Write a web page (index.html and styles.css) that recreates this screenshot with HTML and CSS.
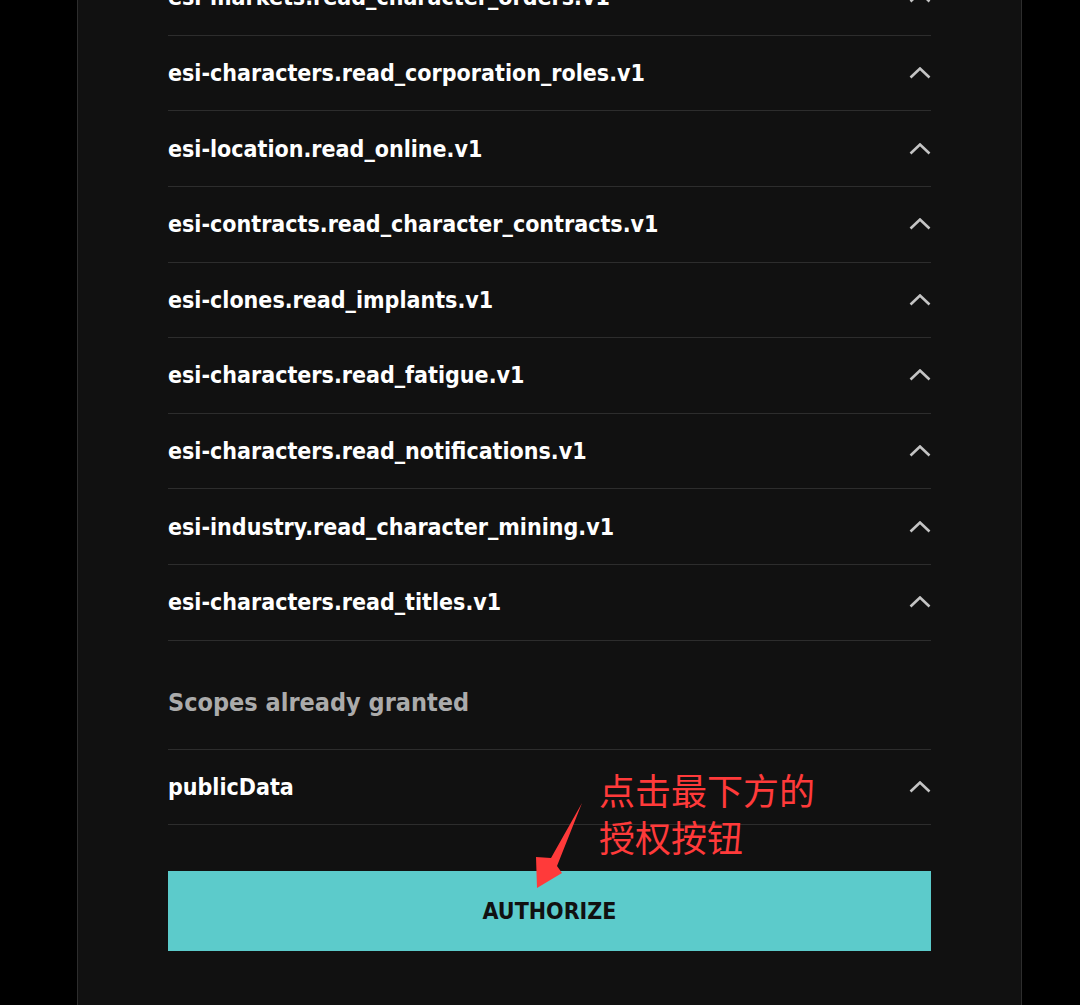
FILE: index.html
```html
<!DOCTYPE html>
<html lang="en">
<head>
    <meta charset="UTF-8">
    <meta name="viewport" content="width=device-width, initial-scale=1.0">
    <title>Authorize</title>
    <link rel="stylesheet" href="styles.css">
</head>
<body>
    <div class="panel">
        <ul class="scope-list">
            <li class="scope"><span>esi-markets.read_character_orders.v1</span><svg class="chevron" viewBox="0 0 22 12"><polyline points="1.5,10.5 11,1.5 20.5,10.5"/></svg></li>
            <li class="scope"><span>esi-characters.read_corporation_roles.v1</span><svg class="chevron" viewBox="0 0 22 12"><polyline points="1.5,10.5 11,1.5 20.5,10.5"/></svg></li>
            <li class="scope"><span>esi-location.read_online.v1</span><svg class="chevron" viewBox="0 0 22 12"><polyline points="1.5,10.5 11,1.5 20.5,10.5"/></svg></li>
            <li class="scope"><span>esi-contracts.read_character_contracts.v1</span><svg class="chevron" viewBox="0 0 22 12"><polyline points="1.5,10.5 11,1.5 20.5,10.5"/></svg></li>
            <li class="scope"><span>esi-clones.read_implants.v1</span><svg class="chevron" viewBox="0 0 22 12"><polyline points="1.5,10.5 11,1.5 20.5,10.5"/></svg></li>
            <li class="scope"><span>esi-characters.read_fatigue.v1</span><svg class="chevron" viewBox="0 0 22 12"><polyline points="1.5,10.5 11,1.5 20.5,10.5"/></svg></li>
            <li class="scope"><span>esi-characters.read_notifications.v1</span><svg class="chevron" viewBox="0 0 22 12"><polyline points="1.5,10.5 11,1.5 20.5,10.5"/></svg></li>
            <li class="scope"><span>esi-industry.read_character_mining.v1</span><svg class="chevron" viewBox="0 0 22 12"><polyline points="1.5,10.5 11,1.5 20.5,10.5"/></svg></li>
            <li class="scope"><span>esi-characters.read_titles.v1</span><svg class="chevron" viewBox="0 0 22 12"><polyline points="1.5,10.5 11,1.5 20.5,10.5"/></svg></li>
        </ul>

        <div class="granted">
            <h3 class="granted-title">Scopes already granted</h3>
            <ul class="scope-list">
                <li class="scope"><span>publicData</span><svg class="chevron" viewBox="0 0 22 12"><polyline points="1.5,10.5 11,1.5 20.5,10.5"/></svg></li>
            </ul>
            <button class="authorize">AUTHORIZE</button>

            <!-- screenshot annotation -->
            <div class="note">点击最下方的<br>授权按钮</div>
            <svg class="note-arrow" viewBox="0 0 60 95"><polygon points="52,5 27,68 32,75 7,90 6,59 21,60"/></svg>
        </div>
    </div>
</body>
</html>
```

FILE: styles.css
```css
:root {
    --panel-bg: #111111;
    --line-color: #2d2d2d;
    --text-color: #ffffff;
    --muted-color: #ababab;
    --accent-color: #5ccbcb;
    --note-color: #ff3a3a;
}

* {
    margin: 0;
    padding: 0;
    box-sizing: border-box;
}

body {
    background: #000;
    font-family: 'DejaVu Sans Condensed', 'DejaVu Sans', sans-serif;
    font-stretch: condensed;
    color: var(--text-color);
    height: 1005px;
    overflow: hidden;
}

.panel {
    width: 945px;
    min-height: 1100px;
    margin: -40px 0 0 77px;
    padding: 0 90px;
    background: var(--panel-bg);
    border-left: 1px solid var(--line-color);
    border-right: 1px solid var(--line-color);
}

.scope-list {
    list-style: none;
}

.scope {
    display: flex;
    justify-content: space-between;
    align-items: center;
    height: 75.625px;
    border-bottom: 1px solid var(--line-color);
    font-size: 23px;
    font-weight: bold;
}

.chevron {
    width: 22px;
    height: 12px;
    fill: none;
    stroke: #c4c4c4;
    stroke-width: 2.6;
}

.granted {
    position: relative;
}

.granted-title {
    padding: 46px 0 30px;
    border-bottom: 1px solid var(--line-color);
    font-size: 25px;
    line-height: 32px;
    font-weight: bold;
    color: var(--muted-color);
}

.authorize {
    display: block;
    width: 100%;
    height: 80px;
    margin-top: 46px;
    border: none;
    background: var(--accent-color);
    color: #111;
    font-family: inherit;
    font-stretch: condensed;
    font-size: 23px;
    font-weight: bold;
}

.note {
    position: absolute;
    left: 431px;
    top: 125px;
    font-family: 'Noto Sans CJK SC', sans-serif;
    font-stretch: normal;
    font-size: 36px;
    line-height: 47px;
    color: var(--note-color);
}

.note-arrow {
    position: absolute;
    left: 362px;
    top: 157px;
    width: 60px;
    height: 95px;
    fill: var(--note-color);
}
```
